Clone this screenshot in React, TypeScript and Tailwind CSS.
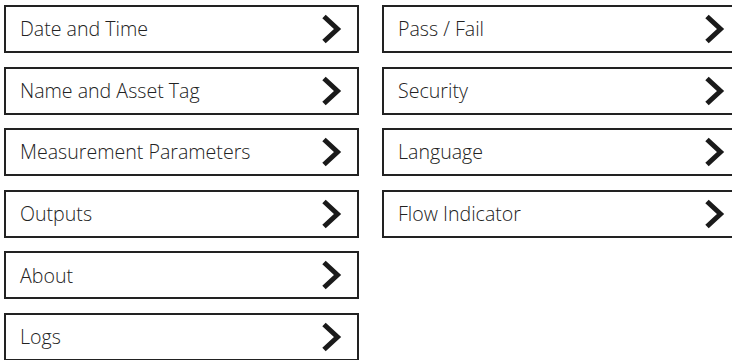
import React from "react";

const Chevron = () => (
  <svg width="22" height="30" viewBox="0 0 22 30" className="shrink-0">
    <polyline
      points="4,2.5 17.5,15 4,27.5"
      fill="none"
      stroke="#1a1a1a"
      strokeWidth="5"
      strokeLinejoin="miter"
      strokeLinecap="butt"
    />
  </svg>
);

const Item = ({ label, wide }: { label: string; wide?: boolean }) => (
  <div
    className={`flex h-[48px] shrink-0 items-center justify-between border-2 border-[#222] bg-white pl-[14px] pr-[15px] ${
      wide ? "w-[360px]" : "w-[355px]"
    }`}
  >
    <span
      className="text-[19.6px] font-light text-[#222] leading-none"
      style={{ fontFamily: '"Open Sans", sans-serif' }}
    >
      {label}
    </span>
    <Chevron />
  </div>
);

export default function App() {
  const left = ["Date and Time", "Name and Asset Tag", "Measurement Parameters", "Outputs", "About", "Logs"];
  const right = ["Pass / Fail", "Security", "Language", "Flow Indicator"];
  return (
    <div className="h-[360px] w-[732px] overflow-hidden bg-white">
      <div className="flex gap-[23px] pl-[4px] pt-[5px]">
        <div className="flex flex-col gap-[13.6px]">
          {left.map((l) => (
            <Item key={l} label={l} />
          ))}
        </div>
        <div className="flex flex-col gap-[13.6px]">
          {right.map((l) => (
            <Item key={l} label={l} wide />
          ))}
        </div>
      </div>
    </div>
  );
}
